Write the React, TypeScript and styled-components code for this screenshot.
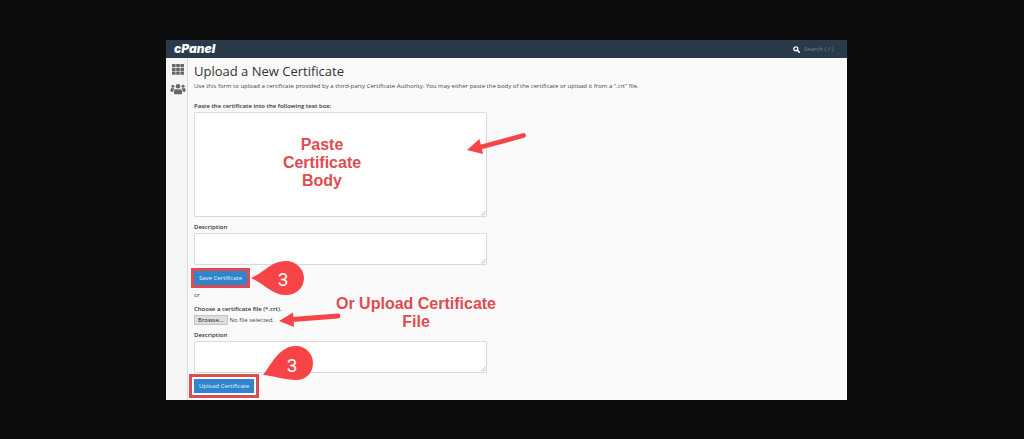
import React from "react";
import styled, { createGlobalStyle } from "styled-components";

const red = "#f84446";
const noteRed = "#de4c52";

const GlobalStyle = createGlobalStyle`
  * { box-sizing: border-box; }
  body {
    margin: 0;
    background: #0d0d0d;
    color: #444;
    font: 6px/8px "Open Sans", "Noto Sans", sans-serif;
  }
`;

const Stage = styled.main`
  padding: 40px 177px 39px 166px;
`;

const Window = styled.div`
  position: relative;
  background: #fafafa;
  overflow: hidden;
`;

const TopBar = styled.header`
  display: flex;
  align-items: center;
  justify-content: space-between;
  height: 18px;
  padding: 0 11px 0 8px;
  background: #293a4a;
`;

const Logo = styled.a`
  color: #fff;
  font: italic 900 12px/16px Inter, sans-serif;
  text-decoration: none;
`;

const Search = styled.label`
  display: flex;
  align-items: center;
  gap: 4px;

  input {
    width: 32px;
    height: 10px;
    padding: 0;
    border: 0;
    outline: 0;
    background: transparent;
    font: 6px/8px "Open Sans", sans-serif;
  }

  input::placeholder {
    color: #7b8793;
  }
`;

const Body = styled.div`
  display: flex;
`;

const SideNav = styled.nav`
  display: flex;
  flex-direction: column;
  align-items: center;
  gap: 8px;
  width: 22px;
  padding: 6px 0 0 2px;
  border-right: 1px solid #dcdcdc;
  background: #f5f5f5;

  a {
    display: flex;
    color: #666;
  }
`;

const Content = styled.div`
  flex: 1;
  min-width: 0;
  padding: 5px 2px 7px 6px;
`;

const Title = styled.h1`
  margin: 0;
  color: #333;
  font-size: 13px;
  font-weight: 400;
  line-height: 16px;
`;

const Intro = styled.p`
  margin: 2px 0 11px;
  line-height: 10px;
  white-space: nowrap;
`;

const Form = styled.form`
  display: flex;
  flex-direction: column;
  align-items: flex-start;
`;

const Label = styled.label`
  color: #333;
  font-weight: 600;
  line-height: 8px;
`;

const AreaWrap = styled.div<{ $height: number }>`
  position: relative;
  width: 45%;
  height: ${(p) => p.$height}px;
  margin: 2px 0 6px;
`;

const Area = styled.textarea`
  display: block;
  width: 100%;
  height: 100%;
  padding: 3px;
  border: 1px solid #dadada;
  border-radius: 1px;
  outline: 0;
  background: #fff;
  font: inherit;
  resize: none;
`;

const Grip = styled.svg`
  position: absolute;
  right: 1px;
  bottom: 1px;
`;

const Submit = styled.button<{ $frameGap: number }>`
  height: 14px;
  padding: 0 5px;
  border: 0;
  background: #3083cd;
  color: #e9f3fb;
  font: 6px/14px "Open Sans", sans-serif;
  white-space: nowrap;
  outline: 3px solid ${noteRed};
  outline-offset: ${(p) => p.$frameGap}px;
`;

const Or = styled.p`
  margin: 6px 0;
  line-height: 8px;
`;

const FileRow = styled.div`
  position: relative;
  display: flex;
  align-items: center;
  gap: 2px;
  margin: 2px 0 6px;

  input {
    position: absolute;
    inset: 0;
    width: 100%;
    opacity: 0;
    font-size: 6px;
  }
`;

const Browse = styled.span`
  height: 10px;
  padding: 0 3px;
  border: 1px solid #c4c4c4;
  background: #dedede;
  color: #222;
  line-height: 8px;
`;

const Note = styled.p<{ $x: number; $y: number; $width: number }>`
  position: absolute;
  left: ${(p) => p.$x}px;
  top: ${(p) => p.$y}px;
  width: ${(p) => p.$width}px;
  margin: 0;
  color: ${noteRed};
  font: 700 16px/18px "Liberation Sans", Arial, sans-serif;
  text-align: center;
  pointer-events: none;
`;

const Drawing = styled.svg<{ $x: number; $y: number }>`
  position: absolute;
  left: ${(p) => p.$x}px;
  top: ${(p) => p.$y}px;
  pointer-events: none;
`;

function TextBox({ id, height }: { id: string; height: number }) {
  return (
    <AreaWrap $height={height}>
      <Area id={id} />
      <Grip width="6" height="6" viewBox="0 0 6 6" stroke="#b4b4b4" strokeWidth="0.8" aria-hidden="true">
        <path d="M1 5.5 L5.5 1 M3 5.5 L5.5 3" />
      </Grip>
    </AreaWrap>
  );
}

function Arrow({ x, y, width, height, line, head }: {
  x: number; y: number; width: number; height: number; line: string; head: string;
}) {
  return (
    <Drawing $x={x} $y={y} width={width} height={height} aria-hidden="true">
      <path d={line} stroke={red} strokeWidth="4.8" strokeLinecap="round" />
      <path d={head} fill={red} />
    </Drawing>
  );
}

function Marker({ x, y, shape, textX, textY }: {
  x: number; y: number; shape: string; textX: number; textY: number;
}) {
  return (
    <Drawing $x={x} $y={y} width="56" height="38">
      <path d={shape} fill={red} />
      <text x={textX} y={textY} fill="#fff" fontSize="19" textAnchor="middle" fontFamily="Roboto, sans-serif">3</text>
    </Drawing>
  );
}

export default function App() {
  return (
    <Stage>
      <GlobalStyle />
      <Window>
        <TopBar>
          <Logo href="#">cPanel</Logo>
          <Search>
            <svg width="7" height="7" viewBox="0 0 7 7" fill="none" stroke="#fff" aria-hidden="true">
              <circle cx="2.8" cy="2.8" r="2" strokeWidth="1.3" />
              <path d="M4.3 4.3 L6.3 6.3" strokeWidth="1.6" strokeLinecap="round" />
            </svg>
            <input type="text" placeholder="Search ( / )" aria-label="Search" />
          </Search>
        </TopBar>
        <Body>
          <SideNav>
            <a href="#" aria-label="Home">
              <svg width="12" height="11" viewBox="0 0 12 11" fill="currentColor">
                {[0, 3.8, 7.6].map((top) =>
                  [0, 4.2, 8.4].map((left) => (
                    <rect key={`${top}-${left}`} x={left} y={top} width="3.6" height="3.1" rx="0.3" />
                  ))
                )}
              </svg>
            </a>
            <a href="#" aria-label="Users">
              <svg width="16" height="12" viewBox="0 0 16 12" fill="currentColor">
                <circle cx="8" cy="3.2" r="2.3" />
                <circle cx="2.9" cy="3.2" r="1.5" />
                <circle cx="13.1" cy="3.2" r="1.5" />
                <path d="M3.9 10 C3.8 7.6 4.6 6.2 6 5.9 Q8 7 10 5.9 C11.4 6.2 12.2 7.6 12.1 10 Q12.1 11.2 11.2 11.2 H4.8 Q3.9 11.2 3.9 10 Z" />
                <path d="M0.5 8 C0.4 6.1 0.8 5.2 1.6 5 Q2.9 5.7 4.2 5.1 Q4.4 5.5 4.5 5.8 Q3.4 6.8 3.2 8.7 H1.2 Q0.5 8.7 0.5 8 Z" />
                <path d="M15.5 8 C15.6 6.1 15.2 5.2 14.4 5 Q13.1 5.7 11.8 5.1 Q11.6 5.5 11.5 5.8 Q12.6 6.8 12.8 8.7 H14.8 Q15.5 8.7 15.5 8 Z" />
              </svg>
            </a>
          </SideNav>
          <Content>
            <Title>Upload a New Certificate</Title>
            <Intro>
              Use this form to upload a certificate provided by a third-party Certificate Authority. You may either paste the body of the certificate or upload it from a “.crt” file.
            </Intro>
            <Form onSubmit={(e) => e.preventDefault()}>
              <Label htmlFor="body">Paste the certificate into the following text box:</Label>
              <TextBox id="body" height={105} />
              <Label htmlFor="body-description">Description</Label>
              <TextBox id="body-description" height={32} />
              <Submit $frameGap={0}>Save Certificate</Submit>
            </Form>
            <Or>or</Or>
            <Form onSubmit={(e) => e.preventDefault()}>
              <Label htmlFor="file">Choose a certificate file (*.crt).</Label>
              <FileRow>
                <Browse>Browse...</Browse>
                <span>No file selected.</span>
                <input id="file" type="file" accept=".crt" />
              </FileRow>
              <Label htmlFor="file-description">Description</Label>
              <TextBox id="file-description" height={32} />
              <Submit $frameGap={2}>Upload Certificate</Submit>
            </Form>
          </Content>
        </Body>
        <Note $x={106} $y={96} $width={100}>Paste Certificate Body</Note>
        <Note $x={165} $y={255} $width={170}>Or Upload Certificate File</Note>
        <Arrow x={300} y={92} width={62} height={24} line="M57.5 3.5 L13 15.5" head="M1 18 L13.5 7 L17 22 Z" />
        <Arrow x={112} y={272} width={64} height={20} line="M60 4 L14 7.5" head="M1 9 L15 0.5 L16 15 Z" />
        <Marker x={85} y={220} textX={32} textY={26} shape="M0 18 C14 12 20 1 35 1 C45 1 53 9 53 18 C53 28 45 35 35 35 C21 35 14 24 0 18 Z" />
        <Marker x={97} y={305} textX={29} textY={27} shape="M0 30 C8 20 16 1 33 1 C43 1 50 9 50 18 C50 28 43 35 33 35 C22 35 12 31 0 30 Z" />
      </Window>
    </Stage>
  );
}
